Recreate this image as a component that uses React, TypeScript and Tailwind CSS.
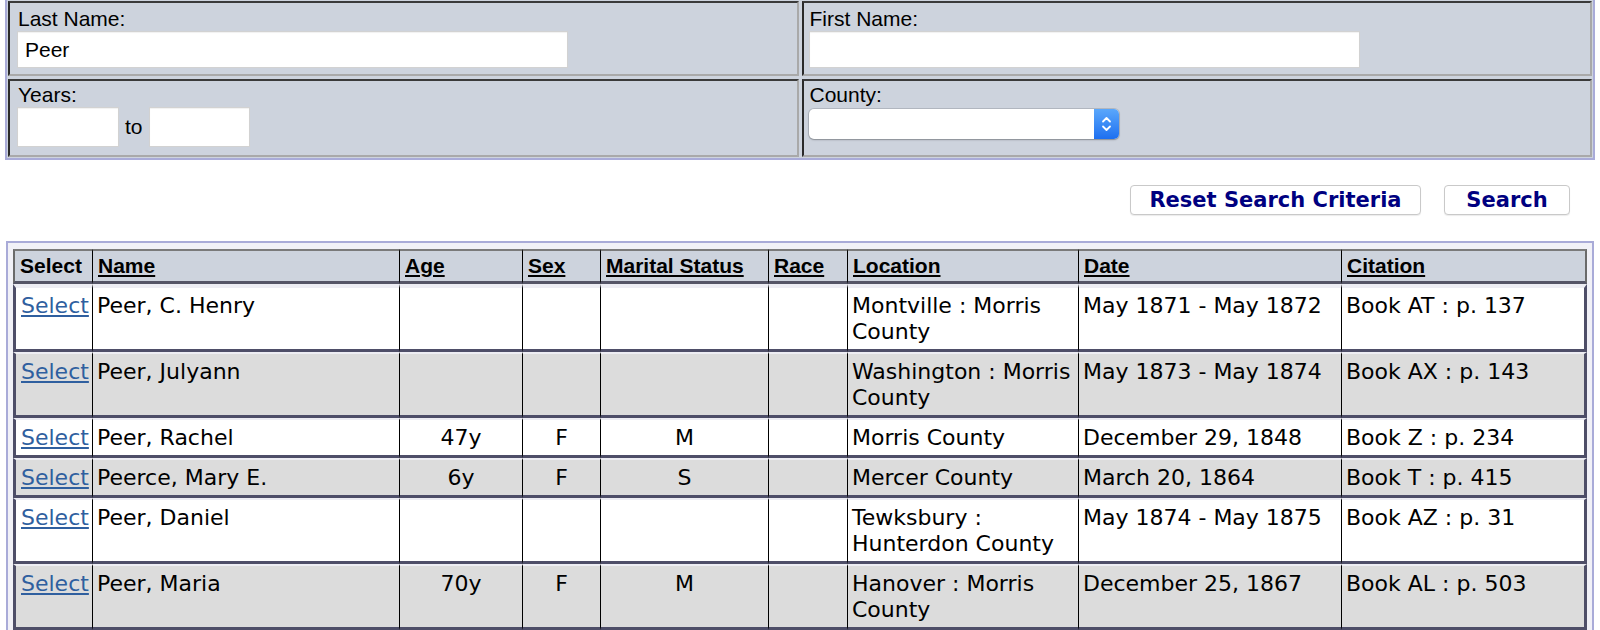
import React from "react";

type Row = {
  name: string;
  age: string;
  sex: string;
  ms: string;
  race: string;
  loc: string;
  date: string;
  cit: string;
};

const rows: Row[] = [
  { name: "Peer, C. Henry", age: "", sex: "", ms: "", race: "", loc: "Montville : Morris County", date: "May 1871 - May 1872", cit: "Book AT : p. 137" },
  { name: "Peer, Julyann", age: "", sex: "", ms: "", race: "", loc: "Washington : Morris County", date: "May 1873 - May 1874", cit: "Book AX : p. 143" },
  { name: "Peer, Rachel", age: "47y", sex: "F", ms: "M", race: "", loc: "Morris County", date: "December 29, 1848", cit: "Book Z : p. 234" },
  { name: "Peerce, Mary E.", age: "6y", sex: "F", ms: "S", race: "", loc: "Mercer County", date: "March 20, 1864", cit: "Book T : p. 415" },
  { name: "Peer, Daniel", age: "", sex: "", ms: "", race: "", loc: "Tewksbury : Hunterdon County", date: "May 1874 - May 1875", cit: "Book AZ : p. 31" },
  { name: "Peer, Maria", age: "70y", sex: "F", ms: "M", race: "", loc: "Hanover : Morris County", date: "December 25, 1867", cit: "Book AL : p. 503" },
];

const headers = ["Select", "Name", "Age", "Sex", "Marital Status", "Race", "Location", "Date", "Citation"];

function FormCell({ children, tall, right }: { children: React.ReactNode; tall?: boolean; right?: boolean }) {
  return (
    <div
      className={
        "border-2 border-t-[#3a3a3a] border-l-[#2a2a2a] border-b-[#a9a9a9] border-r-[#a9a9a9] " +
        (right ? "pl-[5px] pr-[7px] " : "px-[7px] ") +
        (tall ? "h-[78px] pt-[2px]" : "h-[75px] pt-[4px]")
      }
    >
      {children}
    </div>
  );
}

function TextBox({ className, value }: { className: string; value?: string }) {
  return (
    <div
      className={
        "bg-white border border-[#d2d2d2] shadow-[inset_0_1px_1px_rgba(0,0,0,0.06)] pl-[7px] text-[21px] text-black " +
        className
      }
    >
      {value}
    </div>
  );
}

export default function App() {
  return (
    <div className="min-h-screen bg-white font-['Liberation_Sans',Arial,sans-serif] text-black">
      {/* Search form */}
      <div className="mx-[5px] border-2 border-t-0 border-[#a9abd8] bg-[#cdd3dd] p-[1px] grid grid-cols-2 gap-[3px] text-[21px]">
        <FormCell>
          <div className="leading-[24px] pl-[1px]">Last Name:</div>
          <TextBox className="w-[551px] h-[37px] leading-[35px]" value="Peer" />
        </FormCell>
        <FormCell right>
          <div className="leading-[24px] pl-[1px]">First Name:</div>
          <TextBox className="w-[551px] h-[37px] leading-[35px]" />
        </FormCell>
        <FormCell tall>
          <div className="leading-[24px] pl-[1px]">Years:</div>
          <div className="flex items-center gap-[6px]">
            <TextBox className="w-[102px] h-[40px]" />
            <span className="leading-[24px]">to</span>
            <TextBox className="w-[101px] h-[40px]" />
          </div>
        </FormCell>
        <FormCell tall right>
          <div className="leading-[24px] pl-[1px]">County:</div>
          <div className="mt-[2px] w-[310px] h-[30px] flex rounded-[5px] bg-white shadow-[0_0_0_1px_rgba(0,0,0,0.12),0_1px_2px_rgba(0,0,0,0.25)]">
            <div className="flex-1" />
            <div className="w-[25px] h-full rounded-r-[5px] bg-gradient-to-b from-[#5aa7fb] to-[#1d6ff0] flex items-center justify-center">
              <svg width="11" height="20" viewBox="0 0 11 20" fill="none">
                <path d="M2 7.5 L5.5 4 L9 7.5" stroke="white" strokeWidth="1.8" strokeLinecap="round" strokeLinejoin="round" />
                <path d="M2 12.5 L5.5 16 L9 12.5" stroke="white" strokeWidth="1.8" strokeLinecap="round" strokeLinejoin="round" />
              </svg>
            </div>
          </div>
        </FormCell>
      </div>

      {/* Buttons */}
      <div className="mt-[25px] flex justify-end gap-[23px] pr-[30px]">
        <button className="w-[291px] h-[30px] bg-white border border-[#c9c9c9] rounded-[4px] shadow-[0_1px_1px_rgba(0,0,0,0.08)] font-['DejaVu_Sans',Verdana,sans-serif] font-bold text-[21px] leading-[28px] text-[#000080]">
          Reset Search Criteria
        </button>
        <button className="w-[126px] h-[30px] bg-white border border-[#c9c9c9] rounded-[4px] shadow-[0_1px_1px_rgba(0,0,0,0.08)] font-['DejaVu_Sans',Verdana,sans-serif] font-bold text-[21px] leading-[28px] text-[#000080]">
          Search
        </button>
      </div>

      {/* Results */}
      <div className="mx-[6px] mt-[26px] border-2 border-[#a9abd8] bg-[#f1f1f7] pt-[6px] px-[5px] pb-[6px]">
        <table className="table-fixed border-separate border-spacing-0 w-[1574px]">
          <colgroup>
            <col className="w-[79px]" />
            <col className="w-[307px]" />
            <col className="w-[123px]" />
            <col className="w-[78px]" />
            <col className="w-[168px]" />
            <col className="w-[79px]" />
            <col className="w-[231px]" />
            <col className="w-[263px]" />
            <col className="w-[246px]" />
          </colgroup>
          <thead>
            <tr>
              {headers.map((h, i) => (
                <th
                  key={h}
                  className={
                    "bg-[#cdd3dd] text-left align-top font-bold text-[21px] leading-[24px] py-[3px] px-[5px] border-t-2 border-t-[#7a7a7a] border-b-[3px] border-b-[#555566] " +
                    (i === 0 ? "border-l-2 border-l-[#6a6a6a] " : "border-l border-l-black ") +
                    (i === headers.length - 1 ? "border-r-2 border-r-[#6a6a6a]" : "")
                  }
                >
                  {i === 0 ? h : <span className="underline underline-offset-[2px]">{h}</span>}
                </th>
              ))}
            </tr>
          </thead>
          <tbody className="font-['DejaVu_Sans',Verdana,sans-serif] text-[22px] leading-[26px]">
            {rows.map((r, idx) => {
              const bg = idx % 2 === 1 ? "bg-[#dcdcdc]" : "bg-white";
              const base =
                bg +
                " align-top pt-[5px] pb-[4px] px-[4px] border-t-[#ededf3] border-b-[3px] border-b-[#4e4e68] " +
                (idx === 0 ? "border-t-4 " : "border-t-2 ");
              const cells: React.ReactNode[] = [
                <a key="s" href="#" className="text-[#2f5f9f] underline underline-offset-[2px]">Select</a>,
                r.name,
                r.age,
                r.sex,
                r.ms,
                r.race,
                r.loc,
                r.date,
                r.cit,
              ];
              return (
                <tr key={idx}>
                  {cells.map((c, i) => (
                    <td
                      key={i}
                      className={
                        base +
                        (i === 0 ? "border-l-[3px] border-l-[#4e4e68] pl-[5px] pr-0 " : "border-l border-l-black ") +
                        (i === cells.length - 1 ? "border-r-[3px] border-r-[#4e4e68] " : "") +
                        (i >= 2 && i <= 4 ? "text-center" : "text-left")
                      }
                    >
                      {c}
                    </td>
                  ))}
                </tr>
              );
            })}
          </tbody>
        </table>
      </div>
    </div>
  );
}
